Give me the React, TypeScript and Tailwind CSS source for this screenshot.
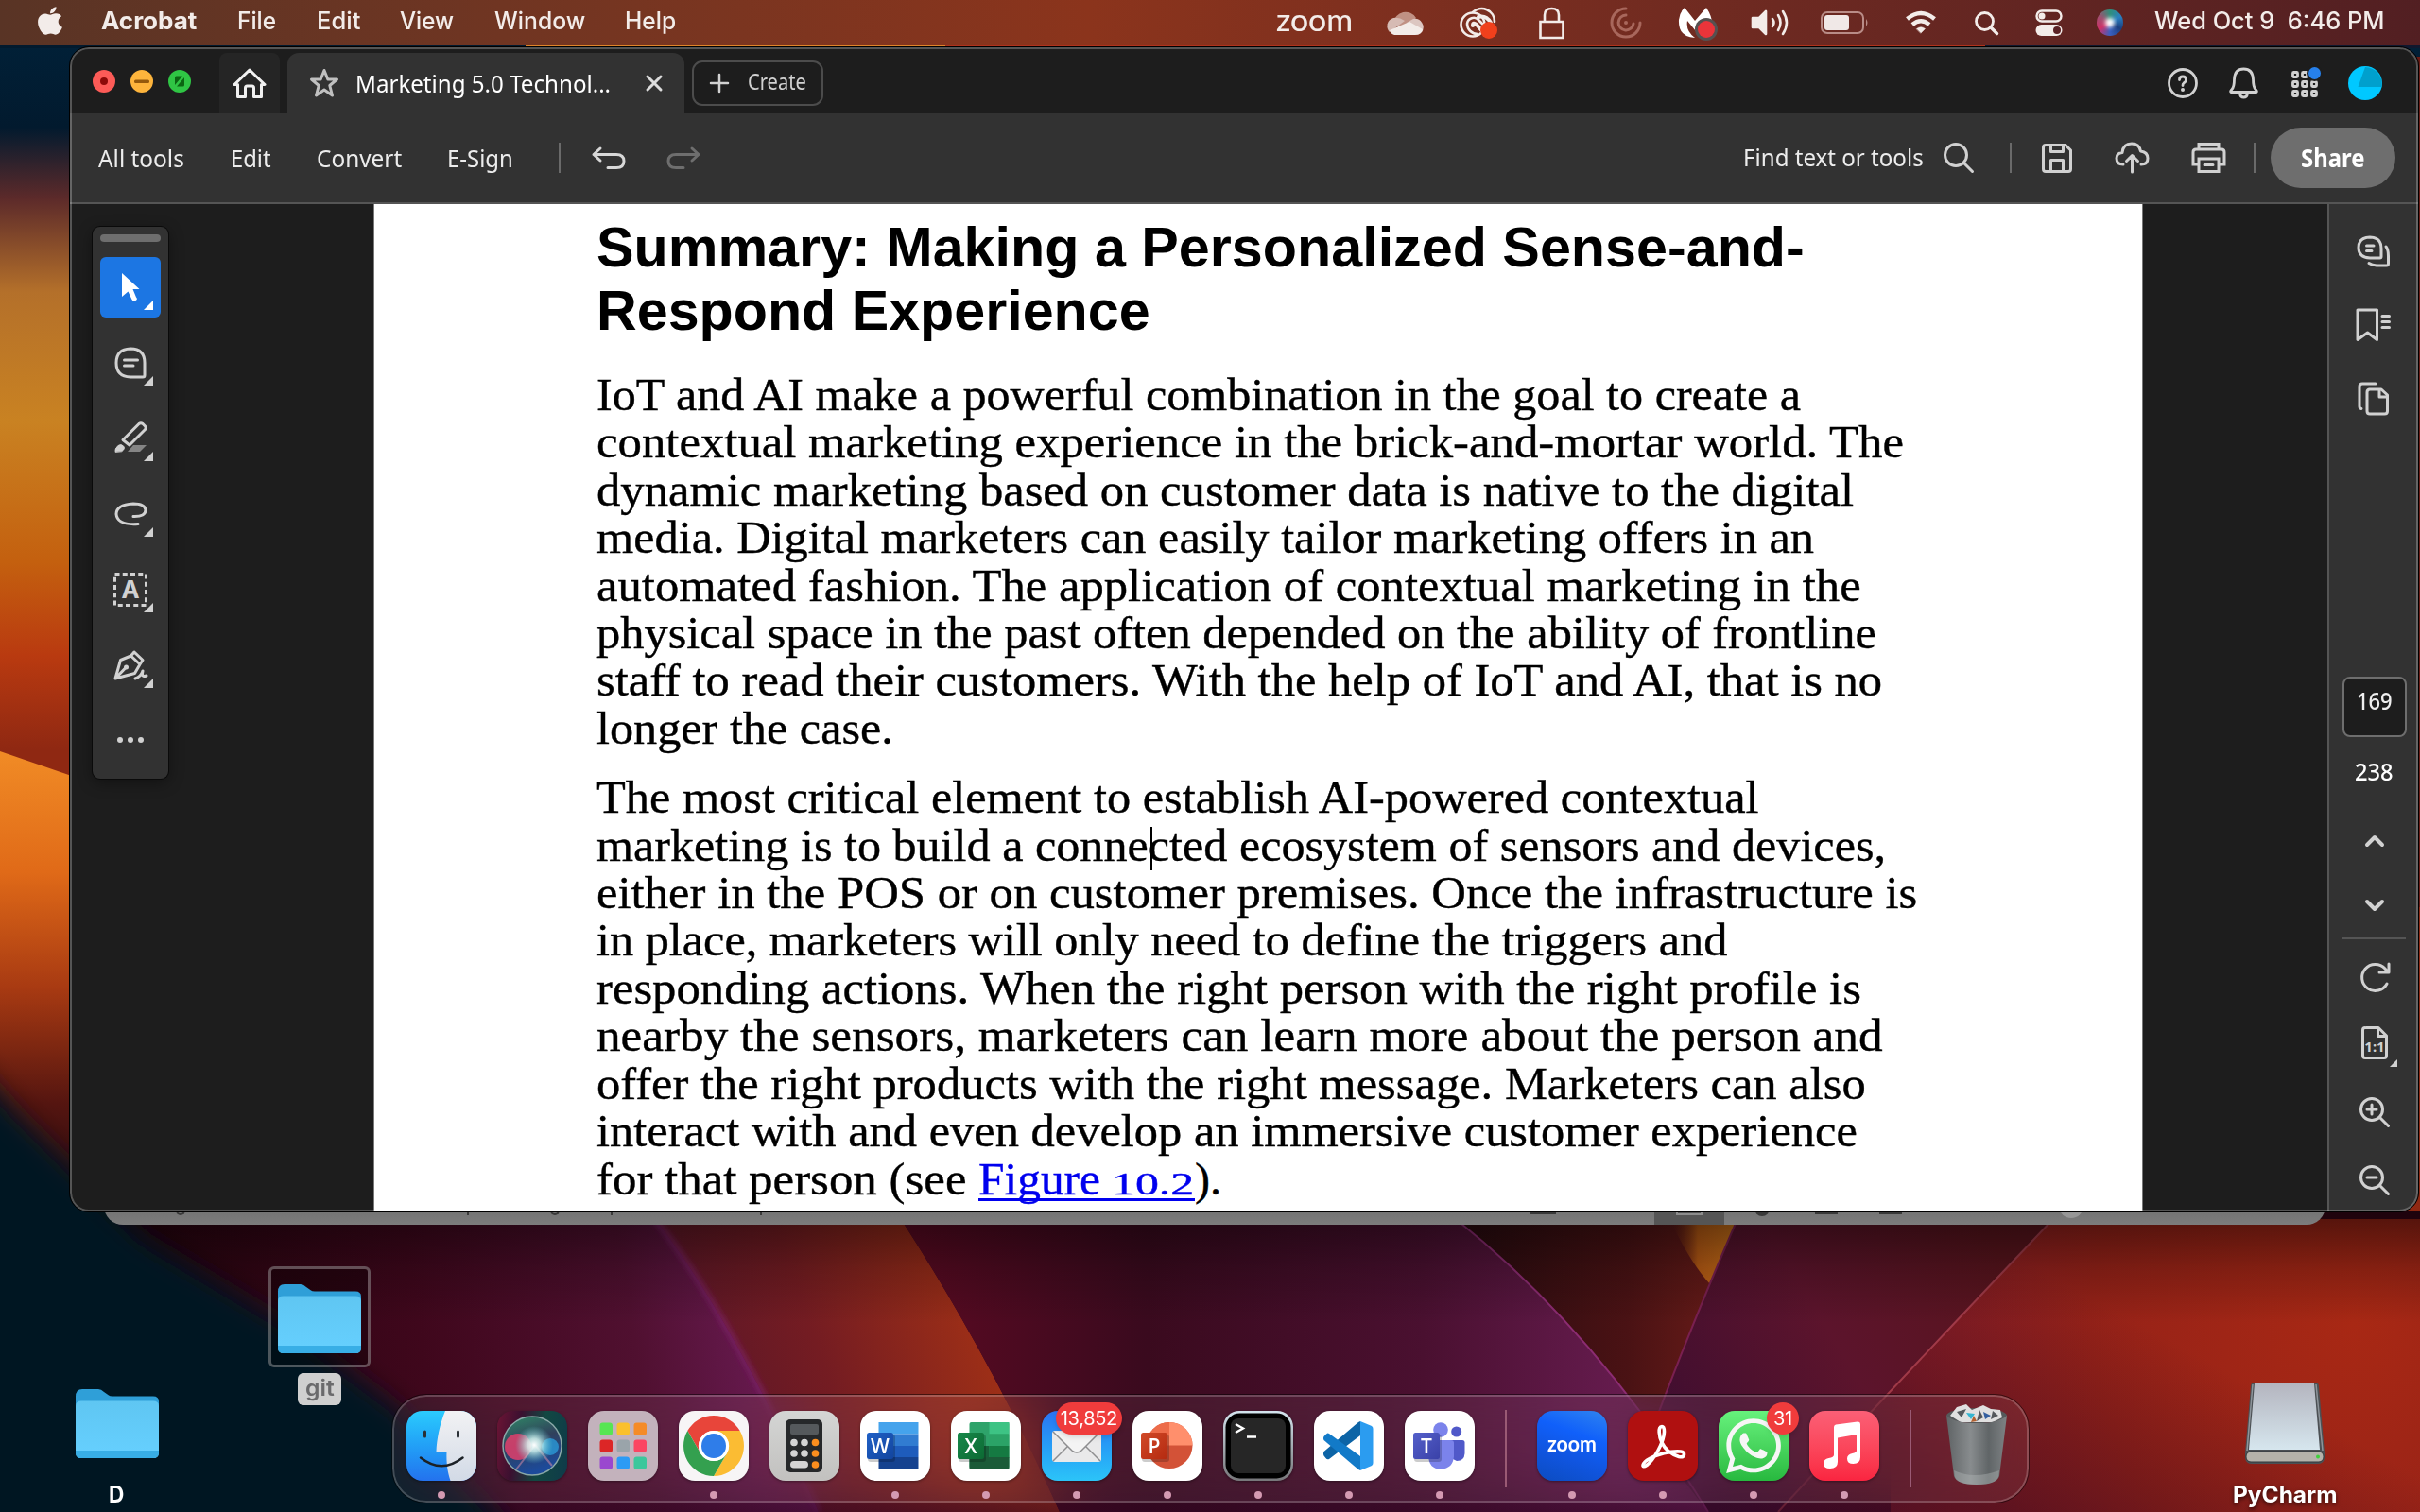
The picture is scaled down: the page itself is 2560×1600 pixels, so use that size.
import React, { useLayoutEffect, useRef, useState } from "react";
import { FaApple, FaWhatsapp } from "react-icons/fa";

/* Text stretched horizontally so that it fills exactly `w` pixels. */
function Fit({ w, className = "", children }: { w: number; className?: string; children: React.ReactNode }) {
  const ref = useRef<HTMLSpanElement>(null);
  const [s, setS] = useState(1);
  useLayoutEffect(() => {
    if (ref.current) setS(w / ref.current.offsetWidth);
  }, [w]);
  return (
    <span className={"inline-block shrink-0 " + className} style={{ width: w }}>
      <span ref={ref} className="inline-block origin-left whitespace-pre" style={{ transform: `scaleX(${s})` }}>
        {children}
      </span>
    </span>
  );
}

type IconProps = { w: number; h: number; className?: string; children: React.ReactNode; sw?: number };
function Ico({ w, h, className = "", children, sw = 3 }: IconProps) {
  return (
    <svg
      width={w}
      height={h}
      viewBox={`0 0 ${w} ${h}`}
      fill="none"
      stroke="currentColor"
      strokeWidth={sw}
      strokeLinecap="round"
      strokeLinejoin="round"
      className={"block shrink-0 overflow-visible " + className}
    >
      {children}
    </svg>
  );
}

function Wallpaper() {
  return (
    <svg className="absolute inset-0" width="2560" height="1600" viewBox="0 0 2560 1600">
      <defs>
        <linearGradient id="wpBase" x1="200" y1="1500" x2="830" y2="1400" gradientUnits="userSpaceOnUse">
          <stop offset="0" stopColor="#2a0410" />
          <stop offset="0.4" stopColor="#3f071c" />
          <stop offset="0.75" stopColor="#501030" />
          <stop offset="1" stopColor="#6c1c56" />
        </linearGradient>
        <linearGradient id="wpLeft" x1="0" y1="48" x2="0" y2="1290" gradientUnits="userSpaceOnUse">
          <stop offset="0" stopColor="#012037" />
          <stop offset="0.07" stopColor="#021a2e" />
          <stop offset="0.13" stopColor="#5c2a2a" />
          <stop offset="0.21" stopColor="#b4702a" />
          <stop offset="0.32" stopColor="#c98222" />
          <stop offset="0.44" stopColor="#c4600f" />
          <stop offset="0.52" stopColor="#b93a10" />
          <stop offset="0.6" stopColor="#8f2812" />
          <stop offset="1" stopColor="#8f2812" />
        </linearGradient>
        <linearGradient id="wpLeft2" x1="0" y1="800" x2="0" y2="1290" gradientUnits="userSpaceOnUse">
          <stop offset="0" stopColor="#f08a25" />
          <stop offset="0.25" stopColor="#e06a18" />
          <stop offset="0.5" stopColor="#a83a12" />
          <stop offset="0.75" stopColor="#551510" />
          <stop offset="1" stopColor="#200810" />
        </linearGradient>
        <linearGradient id="wpOrange" x1="700" y1="1500" x2="1040" y2="1380" gradientUnits="userSpaceOnUse">
          <stop offset="0" stopColor="#54152a" />
          <stop offset="0.5" stopColor="#741c22" />
          <stop offset="1" stopColor="#a03016" />
        </linearGradient>
        <linearGradient id="wpMid" x1="960" y1="0" x2="1800" y2="0" gradientUnits="userSpaceOnUse">
          <stop offset="0" stopColor="#5a0a22" />
          <stop offset="0.3" stopColor="#3a0a1e" />
          <stop offset="0.65" stopColor="#4a1030" />
          <stop offset="1" stopColor="#70205a" />
        </linearGradient>
        <linearGradient id="wpDark" x1="1560" y1="0" x2="1830" y2="0" gradientUnits="userSpaceOnUse">
          <stop offset="0" stopColor="#2c0c10" />
          <stop offset="0.6" stopColor="#4a1214" />
          <stop offset="1" stopColor="#6a1c18" />
        </linearGradient>
        <linearGradient id="wpR1" x1="1760" y1="1500" x2="2100" y2="1300" gradientUnits="userSpaceOnUse">
          <stop offset="0" stopColor="#400e30" />
          <stop offset="0.5" stopColor="#5c142c" />
          <stop offset="1" stopColor="#58141c" />
        </linearGradient>
        <radialGradient id="wpR2" cx="2490" cy="1400" r="620" gradientUnits="userSpaceOnUse">
          <stop offset="0" stopColor="#a82814" />
          <stop offset="0.45" stopColor="#962218" />
          <stop offset="0.75" stopColor="#8a1e28" />
          <stop offset="1" stopColor="#70183a" />
        </radialGradient>
        <linearGradient id="wpDim" x1="2300" y1="1420" x2="2180" y2="1640" gradientUnits="userSpaceOnUse">
          <stop offset="0" stopColor="#3c0a1c" stopOpacity="0" />
          <stop offset="1" stopColor="#3c0a1c" stopOpacity="0.6" />
        </linearGradient>
        <linearGradient id="wpShade" x1="0" y1="1282" x2="0" y2="1400" gradientUnits="userSpaceOnUse">
          <stop offset="0" stopColor="#000" stopOpacity="0.5" />
          <stop offset="0.5" stopColor="#000" stopOpacity="0.2" />
          <stop offset="1" stopColor="#000" stopOpacity="0" />
        </linearGradient>
        <linearGradient id="wpTri" x1="1770" y1="0" x2="1835" y2="0" gradientUnits="userSpaceOnUse">
          <stop offset="0" stopColor="#7a3010" stopOpacity="0" />
          <stop offset="0.4" stopColor="#b65a14" />
          <stop offset="1" stopColor="#c87018" />
        </linearGradient>
        <linearGradient id="wpBot" x1="0" y1="1540" x2="0" y2="1600" gradientUnits="userSpaceOnUse">
          <stop offset="0" stopColor="#2a0420" stopOpacity="0" />
          <stop offset="1" stopColor="#2a0420" stopOpacity="0.55" />
        </linearGradient>
        <filter id="soft" x="-20%" y="-20%" width="140%" height="140%">
          <feGaussianBlur stdDeviation="14" />
        </filter>
        <filter id="soft2" x="-20%" y="-20%" width="140%" height="140%">
          <feGaussianBlur stdDeviation="3" />
        </filter>
      </defs>
      <rect width="2560" height="1600" fill="#3c0519" />
      <path d="M0 1200H693V1290Q775 1395 866 1600H0Z" fill="url(#wpBase)" />
      <rect width="2560" height="1282" fill="url(#wpLeft)" />
      <path d="M0 795L160 850V1290H0Z" fill="url(#wpLeft2)" />
      {/* petals along the bottom */}
      <path d="M693 1290Q775 1395 866 1600H1121Q1050 1440 953 1290Z" fill="url(#wpOrange)" />
      <path d="M693 1290Q775 1395 866 1600" stroke="#7d2068" strokeWidth="5" fill="none" filter="url(#soft2)" />
      <path d="M953 1290Q1050 1440 1121 1600H1807Q1720 1450 1560 1290Z" fill="url(#wpMid)" />
      <path d="M1540 1290Q1690 1410 1807 1600H1881L2169 1290Z" fill="url(#wpDark)" />
      <path d="M1766 1290H1838L1812 1362Q1790 1340 1766 1290Z" fill="url(#wpTri)" />
      <path d="M1838 1290Q1790 1400 1745 1520L1807 1600H1881L2172 1290Z" fill="url(#wpR1)" />
      <path d="M2172 1290Q2010 1460 1881 1600H2560V1290Z" fill="url(#wpR2)" />
      <path d="M2172 1290Q2010 1460 1881 1600H2560V1290Z" fill="url(#wpDim)" />
      <path d="M1540 1290Q1690 1410 1807 1600" stroke="#8c2c72" strokeWidth="2" fill="none" />
      <path d="M2172 1290Q2010 1460 1881 1600" stroke="#a03a48" strokeWidth="2" fill="none" />
      <path d="M1838 1290Q1790 1400 1745 1520" stroke="#7a2050" strokeWidth="2" fill="none" />
      <rect y="1540" x="500" width="1500" height="60" fill="url(#wpBot)" />
      <rect y="1282" width="2560" height="120" fill="url(#wpShade)" />
      <path d="M-60 1090L20 1180L150 1310L300 1400L420 1490L560 1640H-60Z" fill="#031421" filter="url(#soft)" />
      <rect y="48" width="560" height="3" fill="#021a2e" />
      <rect x="556" y="48" width="500" height="3" fill="#e0842a" />
      <rect x="1000" y="48" width="1100" height="3" fill="#b0321c" />
      <rect x="2100" y="48" width="460" height="3" fill="#10182e" />
      <rect x="2555" y="60" width="5" height="900" fill="#6b1a14" />
    </svg>
  );
}

function MenuBar() {
  return (
    <header className="relative flex h-12 items-center bg-linear-to-r from-[#593425] via-[#8b341c] via-45% to-[#521f22] pl-10 font-['Inter'] text-[25px] text-[#f3ece9]">
      <FaApple className="-mt-1 h-8 w-[26px] shrink-0 scale-x-110 scale-y-105" />
      <div className="flex pb-[2px]">
        <Fit w={101} className="ml-[41px] font-bold">Acrobat</Fit>
        <Fit w={41} className="ml-[43px] font-medium">File</Fit>
        <Fit w={46} className="ml-[43px] font-medium">Edit</Fit>
        <Fit w={57} className="ml-[42px] font-medium">View</Fit>
        <Fit w={96} className="ml-[43px] font-medium">Window</Fit>
        <Fit w={54} className="ml-[42px] font-medium">Help</Fit>
      </div>
      <div className="ml-auto flex items-center pr-[38px]">
        <Fit w={81} className="pb-[6px] font-['Lato'] text-[32px] leading-[36px] font-medium">zoom</Fit>
        <Ico w={40} h={28} className="ml-[35px]" sw={0}>
          <path d="M8 14A13 13 0 0 1 32 9L20 20Z" fill="#c09184" />
          <path d="M8 9Q14 8 20 12L4 24A9 9 0 0 1 8 9Z" fill="#d6bbb4" />
          <path d="M29 10A9 9 0 0 1 38 24L22 14Z" fill="#dcc6c1" />
          <path d="M4 22L25 13L39 21Q38 27 31 27H9Q5 26 4 22Z" fill="#f3ece9" />
        </Ico>
        <Ico w={40} h={32} className="ml-[38px]" sw={2.6}>
          <circle cx="14" cy="18" r="12.5" />
          <path d="M14 5A13.500 13.500 0 0 1 37 15" />
          <path d="M19 28A11 11 0 0 1 8 17A7 7 0 0 1 20 13L26 19" />
          <path d="M14 19Q14 15 18 18L24 25" strokeWidth="4" />
          <path d="M20 10Q28 8 33 16" strokeWidth="4" />
          <circle cx="31" cy="24" r="9" fill="#f0401c" stroke="none" />
        </Ico>
        <Ico w={27} h={34} className="ml-[44px]" sw={2.6}>
          <path d="M1.500 16H25.500V33H1.500ZM6 16V9Q6 2 13.500 2T21 9V16" strokeLinejoin="miter" />
        </Ico>
        <Ico w={32} h={34} className="ml-[49px] text-[#a8675c]" sw={3}>
          <path d="M16 2A15 15 0 1 0 31 17" />
          <path d="M16 9A8 8 0 1 0 24 18" />
          <circle cx="16" cy="17" r="2" fill="currentColor" stroke="none" />
        </Ico>
        <Ico w={40} h={34} className="ml-[39px]" sw={0}>
          <path d="M7 1L18 15L30 1Q41 18 32 28L29 14L19 26L10 15Q8 26 18 33Q0 32 1 14Q2 6 7 1Z" fill="#fff" />
          <circle cx="30" cy="24" r="12" fill="#565050" />
          <circle cx="30" cy="24" r="9" fill="#ea343a" />
        </Ico>
        <Ico w={39} h={28} className="ml-[38px]" sw={2.6}>
          <path d="M1 9H8L15 2V26L8 19H1Z" fill="currentColor" />
          <path d="M22 10Q25 14 22 18M28 6Q33 14 28 22M33 2Q41 14 33 26" />
        </Ico>
        <Ico w={51} h={24} className="ml-[34px]" sw={2}>
          <rect x="1" y="1" width="44" height="22" rx="6" stroke="#b98c87" />
          <rect x="4" y="4" width="26" height="16" rx="3" fill="#f0e8e7" stroke="none" />
          <path d="M48 8Q51 12 48 16Z" fill="#b98c87" stroke="none" />
        </Ico>
        <Ico w={34} h={26} className="ml-[38px]" sw={4.500}>
          <path d="M2.500 9Q17-3 31.500 9" strokeLinecap="butt" />
          <path d="M8 15Q17 7.500 26 15" strokeLinecap="butt" />
          <path d="M12.500 19.500Q17 16 21.500 19.500L17 24Z" fill="currentColor" strokeWidth="0.500" />
        </Ico>
        <Ico w={25} h={25} className="ml-[40px]" sw={2.800}>
          <circle cx="10.500" cy="10.500" r="9" />
          <path d="M17 17L23.500 23.500" strokeWidth="3.500" />
        </Ico>
        <Ico w={30} h={28} className="ml-[39px]" sw={2.400}>
          <rect x="1.500" y="1.500" width="26" height="11" rx="5.500" />
          <circle cx="7" cy="7" r="3.500" fill="currentColor" stroke="none" />
          <rect x="0.500" y="16" width="28" height="12" rx="6" fill="currentColor" stroke="none" />
          <circle cx="23" cy="22" r="4" fill="#5b2124" stroke="none" />
        </Ico>
        <div className="ml-[35px] flex size-7 items-center justify-center rounded-full bg-[conic-gradient(#2f8f7a,#2a7fc0,#1a3f80,#3a60c0,#d03068,#a05070,#2f8f7a)]">
          <div className="size-2.5 rounded-full bg-white blur-[2px]" />
        </div>
        <Fit w={243} className="ml-[33px] pb-[2px] font-medium">Wed Oct 9  6:46 PM</Fit>
      </div>
    </header>
  );
}

function TitleBar() {
  return (
    <div className="flex h-[70px] items-center bg-[#1d1d1d] pr-[38px] pl-6 font-['Noto_Sans'] text-[#d1d1d1]">
      <div className="flex gap-4 pt-[2px]">
        <Ico w={24} h={24} sw={0}>
          <circle cx="12" cy="12" r="12" fill="#fc5b57" />
          <circle cx="12" cy="12" r="4" fill="#8c0a08" />
        </Ico>
        <Ico w={24} h={24} sw={0}>
          <circle cx="12" cy="12" r="12" fill="#fdb43c" />
          <rect x="4" y="10.500" width="16" height="3.500" rx="1.500" fill="#94590c" />
        </Ico>
        <Ico w={24} h={24} sw={0}>
          <circle cx="12" cy="12" r="12" fill="#2fc544" />
          <path d="M7 16V8Q7 6.500 8.500 6.500H15ZM17 8V16Q17 17.500 15.500 17.500H9Z" fill="#0b6512" />
        </Ico>
      </div>
      <div className="ml-[30px] flex h-16 w-16 items-center justify-center self-end rounded-t-lg bg-[#252525] text-[#f0f0f0]">
        <Ico w={36} h={32} sw={3}>
          <path d="M18 2L34 17.500H30.500V30.500H22.500V21Q22.500 19 20.500 19H15.500Q13.500 19 13.500 21V30.500H5.500V17.500H2Z" />
        </Ico>
      </div>
      <div className="ml-2 flex h-16 w-[420px] items-center self-end rounded-t-xl bg-[#323232] pl-[23px]">
        <Ico w={32} h={32} sw={3} className="text-[#c0c0c0]">
          <path d="M16 2.500L19.800 12H29.500L21.800 18.500L24.500 29L16 23L7.500 29L10.200 18.500L2.500 12H12.200Z" />
        </Ico>
        <Fit w={270} className="ml-[17px] text-[26px] text-white">Marketing 5.0 Technol...</Fit>
        <Ico w={16} h={16} sw={3} className="ml-[38px] text-[#dcdcdc]">
          <path d="M1 1L15 15M15 1L1 15" />
        </Ico>
      </div>
      <div className="mt-[14px] ml-[8px] flex h-12 w-[139px] items-center self-start rounded-[11px] border-2 border-[#4c4c4c] pl-[17px]">
        <Ico w={20} h={20} sw={2.500}>
          <path d="M10 1V19M1 10H19" />
        </Ico>
        <Fit w={62} className="ml-[20px] pb-1 text-[23px]">Create</Fit>
      </div>
      <div className="ml-auto flex items-center pt-1.5">
        <Ico w={32} h={32} sw={2.800}>
          <circle cx="16" cy="16" r="14.500" />
          <path d="M12.500 12.500Q12.500 9 16 9T19.500 12.500Q19.500 14.500 17 16Q16 16.800 16 18.500" />
          <circle cx="16" cy="23" r="2" fill="currentColor" stroke="none" />
        </Ico>
        <Ico w={32} h={34} sw={2.800} className="ml-[33px]">
          <path d="M2 26.500H29Q30 25.500 28 23.500Q25.500 21 25.500 13Q25 2 15.500 2T5.500 13Q5.500 21 3 23.500Q1 25.500 2 26.500Z" />
          <path d="M11.500 28Q12 32 15.500 32T19.500 28" />
        </Ico>
        <div className="relative ml-[34px]">
          <Ico w={30} h={30} sw={2.800}>
            {[3.500, 13.500, 23.500].map((y) =>
              [3.500, 13.500, 23.500].map((x) => <rect key={`${x}-${y}`} x={x - 2} y={y} width="5" height="5" rx="1" />)
            )}
          </Ico>
          <span className="absolute -top-1 right-[-3px] size-[17px] rounded-full border-2 border-[#1d1d1d] bg-[#2680eb]" />
        </div>
        <Ico w={36} h={36} sw={0} className="ml-[30px]">
          <circle cx="18" cy="18" r="18" fill="#00c8ff" />
          <path d="M18 1A18 18 0 0 1 35.500 22H10.500Z" fill="#00a0cd" />
        </Ico>
      </div>
    </div>
  );
}

function Toolbar() {
  return (
    <div className="flex h-24 items-center border-b-2 border-[#555] bg-[#323232] pr-6 pl-[30px] font-['Noto_Sans'] text-[26px] text-[#ececec]">
      <Fit w={91} className="pt-px">All tools</Fit>
      <Fit w={43} className="ml-[49px] pt-px">Edit</Fit>
      <Fit w={90} className="ml-[48px] pt-px">Convert</Fit>
      <Fit w={70} className="ml-[48px] pt-px">E-Sign</Fit>
      <span className="ml-[48px] h-8 w-[2px] bg-[#6a6a6a]" />
      <Ico w={36} h={24} sw={3} className="ml-[33px] text-[#d8d8d8]">
        <path d="M9 2L2 8.500L9 15M2 8.500H26Q34 8.500 34 15.500T26 22.500H17" />
      </Ico>
      <Ico w={36} h={24} sw={3} className="ml-[43px] text-[#6e6e6e]">
        <path d="M27 2L34 8.500L27 15M34 8.500H10Q2 8.500 2 15.500T10 22.500H18" />
      </Ico>
      <div className="ml-auto flex items-center text-[#d1d1d1]">
        <Fit w={191} className="pb-[2px] text-[#ececec]">Find text or tools</Fit>
        <Ico w={32} h={32} sw={3} className="ml-[21px]">
          <circle cx="13" cy="13" r="11.500" />
          <path d="M21.500 21.500L30.500 30.500" />
        </Ico>
        <span className="ml-[38px] h-8 w-[2px] bg-[#6a6a6a]" />
        <Ico w={32} h={31} sw={3} className="ml-[32px]">
          <path d="M4 1.500H25L30.500 7V27Q30.500 29.500 28 29.500H4Q1.500 29.500 1.500 27V4Q1.500 1.500 4 1.500Z" />
          <path d="M9.500 1.500V8.500H22.500V1.500M9.500 29.500V17.500H22.500V29.500" />
        </Ico>
        <Ico w={37} h={34} sw={3} className="ml-[45px]">
          <path d="M9 24Q2 24 2 17.500Q2 12 8 11.500Q9 2 18 2Q26 2 27.500 10Q35 11 35 17.500Q35 24 28 24M18.500 32V15M12.500 20.500L18.500 14.500L24.500 20.500" />
        </Ico>
        <Ico w={37} h={32} sw={3} className="ml-[44px]">
          <path d="M8 7V1.500H29V7M8 23H2V10Q2 7 5 7H32Q35 7 35 10V23H29M8 17H29V30.500H8ZM14 23.500H23" strokeLinejoin="miter" />
        </Ico>
        <span className="ml-[29px] h-8 w-[2px] bg-[#6a6a6a]" />
        <div className="ml-[16px] flex h-16 w-[132px] items-center justify-center rounded-full bg-[#6e6e6e] pr-[2px] text-white">
          <Fit w={67} className="pt-px font-bold">Share</Fit>
        </div>
      </div>
    </div>
  );
}

const corner = (
  <svg width="10" height="10" className="absolute right-2 bottom-2">
    <path d="M10 0V10H0Z" fill="currentColor" />
  </svg>
);

const tools: { id: string; icon: React.ReactNode }[] = [
  {
    id: "select",
    icon: (
      <Ico w={18} h={30} sw={0} className="mb-px">
        <path d="M0 0V25L6.500 19.500L10.500 28Q12 30.500 14.500 29T15 25.500L11.500 17H18.500Z" fill="#fff" />
      </Ico>
    ),
  },
  {
    id: "comment",
    icon: (
      <Ico w={34} h={34}>
        <path d="M17 2Q32 2 32 17V30Q32 32 30 32H17Q2 31.500 2 17T17 2ZM10.500 14H24.500M10.500 20H20" />
      </Ico>
    ),
  },
  {
    id: "highlight",
    icon: (
      <Ico w={35} h={32} className="mb-1">
        <path d="M26 2.500Q28 1 30 2.500L32.500 5Q34 6.500 32.500 8.500L16 25L9 19.500Z" />
        <path d="M1 32Q0 29 4 25.500Q7 23.500 9.500 26T8 31.500Z" fill="currentColor" strokeWidth="1" />
        <path d="M20 25H34L27 32H14Z" fill="#858585" stroke="none" />
      </Ico>
    ),
  },
  {
    id: "draw",
    icon: (
      <Ico w={35} h={26}>
        <path d="M20 15.500Q33 16 33 8.500Q32 2 20 2Q2 3 2 13Q3 25 25 23.500" />
      </Ico>
    ),
  },
  {
    id: "text",
    icon: (
      <Ico w={36} h={36}>
        <path d="M1.500 1.500H34.500V34.500H1.500Z" strokeDasharray="5 3.250" strokeLinecap="butt" />
        <text x="18" y="27" textAnchor="middle" fontFamily="Noto Sans" fontWeight="700" fontSize="26" fill="currentColor" stroke="none">A</text>
      </Ico>
    ),
  },
  {
    id: "sign",
    icon: (
      <Ico w={36} h={32}>
        <path d="M2 30L7.500 10.500L18.500 6L28 15L22.500 24.500L2 30L13 18.500M18.500 6L22 2L31 10.500L28 15M23 30Q29 28 31 22Q29 29 35 27" />
        <circle cx="13.500" cy="18" r="2.500" fill="currentColor" stroke="none" />
      </Ico>
    ),
  },
];

function Palette() {
  return (
    <div className="flex h-[584px] w-20 flex-col items-center rounded-lg bg-[#323232] pt-2 text-[#d1d1d1] shadow-[0_0_0_1px_#0a0a0a,0_4px_16px_rgba(0,0,0,0.4)]">
      <span className="h-2 w-16 rounded bg-[#6e6e6e]" />
      <div className="mt-4 flex flex-col gap-4">
        {tools.map((t) => (
          <div
            key={t.id}
            className={
              t.id === "select"
                ? "relative flex size-16 items-center justify-center rounded-md bg-[#1c76e3] text-white"
                : "relative flex size-16 items-center justify-center"
            }
          >
            {t.icon}
            {corner}
          </div>
        ))}
      </div>
      <div className="mt-[44px] flex gap-[5px]">
        <span className="size-1.5 rounded-full bg-[#d1d1d1]" />
        <span className="size-1.5 rounded-full bg-[#d1d1d1]" />
        <span className="size-1.5 rounded-full bg-[#d1d1d1]" />
      </div>
    </div>
  );
}

const para1: [string, number][] = [
  ["IoT and AI make a powerful combination in the goal to create a", 1274],
  ["contextual marketing experience in the brick-and-mortar world. The", 1383],
  ["dynamic marketing based on customer data is native to the digital", 1330],
  ["media. Digital marketers can easily tailor marketing offers in an", 1288],
  ["automated fashion. The application of contextual marketing in the", 1338],
  ["physical space in the past often depended on the ability of frontline", 1354],
  ["staff to read their customers. With the help of IoT and AI, that is no", 1360],
  ["longer the case.", 314],
];
const para2: [string, number][] = [
  ["The most critical element to establish AI-powered contextual", 1230],
  ["marketing is to build a connected ecosystem of sensors and devices,", 1364],
  ["either in the POS or on customer premises. Once the infrastructure is", 1397],
  ["in place, marketers will only need to define the triggers and", 1196],
  ["responding actions. When the right person with the right profile is", 1338],
  ["nearby the sensors, marketers can learn more about the person and", 1361],
  ["offer the right products with the right message. Marketers can also", 1343],
  ["interact with and even develop an immersive customer experience", 1334],
];

function Page() {
  return (
    <article className="h-full w-[1870px] overflow-hidden bg-white pt-3 pl-[235px] text-black">
      <h1 className="flex flex-col font-['Liberation_Sans'] text-[58.8px] leading-[67px] font-bold">
        <Fit w={1278}>Summary: Making a Personalized Sense-and-</Fit>
        <Fit w={586}>Respond Experience</Fit>
      </h1>
      <p className="mt-[31px] flex flex-col font-['Liberation_Serif'] text-[48px] leading-[50.4px] [-webkit-text-stroke:0.4px_#000]">
        {para1.map(([t, w]) => (
          <Fit key={t} w={w}>{t}</Fit>
        ))}
      </p>
      <p className="relative mt-[23px] flex flex-col font-['Liberation_Serif'] text-[48px] leading-[50.4px] [-webkit-text-stroke:0.4px_currentColor]">
        {para2.map(([t, w]) => (
          <Fit key={t} w={w}>{t}</Fit>
        ))}
        <span className="flex">
          <Fit w={404}>{"for that person (see "}</Fit>
          <span className="flex h-[48px] border-b-[3px] border-[#0000ee] text-[#0000ee]">
            <Fit w={141}>{"Figure "}</Fit>
            <Fit w={88}>
              <span className="text-[34px]">10.2</span>
            </Fit>
          </span>
          <Fit w={28}>).</Fit>
        </span>
        <span className="absolute top-[56px] left-[586px] h-[46px] w-[2px] bg-black" />
      </p>
    </article>
  );
}

function Rail() {
  return (
    <aside className="flex w-[96px] flex-col items-center border-l-2 border-[#555] bg-[#323232] font-['Noto_Sans'] text-[26px] text-[#d1d1d1]">
      <Ico w={35} h={36} className="mt-[33px] mr-[2px]">
        <path d="M14 2Q26 2 26 14V22.500Q26 24 24.500 24H14Q2 23.500 2 13T14 2ZM10.500 11H18M10.500 16.500H16" />
        <path d="M31 12Q33.500 15 33.500 22V30Q33.500 32 31.500 32H21Q16 31.500 13 29.500" />
      </Ico>
      <Ico w={37} h={36} className="mt-[41px] mr-[2px]">
        <path d="M2 2H22.500V33.500L12.500 26L2 33.500ZM28 8.500H35.500M28 14.500H35.500M28 20.500H35.500" />
      </Ico>
      <Ico w={33} h={36} className="mt-[42px] mr-[2px]">
        <path d="M19 2H5Q2 2 2 5V26Q2 28 4 28.500M12 8H25L31.500 14V31Q31.500 34 28.500 34H13Q10 34 10 31V11Q10 8 13 8M23 8V16H31.500" />
      </Ico>
      <div className="mt-[276px] ml-[2px] flex h-16 w-[68px] justify-center rounded-lg border-2 border-[#6e6e6e] bg-[#1d1d1d] pt-1 text-[#efefef]">
        <Fit w={38} className="leading-[38px] font-medium">169</Fit>
      </div>
      <Fit w={41} className="mt-[17px] leading-[38px] font-medium text-white">238</Fit>
      <Ico w={20} h={12} sw={4} className="mt-[49px] ml-[2px]">
        <path d="M2 10L10 2L18 10" />
      </Ico>
      <Ico w={20} h={12} sw={4} className="mt-[56px] ml-[2px]">
        <path d="M2 2L10 10L18 2" />
      </Ico>
      <span className="mt-[28px] h-[2px] w-[68px] bg-[#555]" />
      <Ico w={32} h={32} className="mt-[24px] ml-[2px]">
        <path d="M29 23A14 14 0 1 1 27 7L30 10.500M31 2V11H21" />
      </Ico>
      <div className="relative mt-[36px] ml-[2px]">
        <Ico w={28} h={35}>
          <path d="M5 1.500H18L26.500 10V31Q26.500 33.500 24 33.500H4Q1.500 33.500 1.500 31V4Q1.500 1.500 4 1.500M17.500 2V10.500H26" />
          <text x="14" y="27" textAnchor="middle" fontFamily="Noto Sans" fontWeight="700" fontSize="15" fill="currentColor" stroke="none">1:1</text>
        </Ico>
        <svg width="8" height="8" className="absolute -right-2.5 -bottom-2">
          <path d="M8 0V8H0Z" fill="currentColor" />
        </svg>
      </div>
      <Ico w={32} h={32} className="mt-[40px] ml-[2px]">
        <circle cx="13" cy="13" r="11.500" />
        <path d="M21.500 21.500L30.500 30.500M8 13H18M13 8V18" />
      </Ico>
      <Ico w={32} h={32} className="mt-[40px] ml-[2px]">
        <circle cx="13" cy="13" r="11.500" />
        <path d="M21.500 21.500L30.500 30.500M8 13H18" />
      </Ico>
    </aside>
  );
}

function AcrobatWindow() {
  return (
    <div className="absolute top-[50px] left-[74px] h-[1232px] w-[2484px] overflow-hidden rounded-[20px] bg-[#1d1d1d] outline-1 outline-black">
      <div className="flex h-full flex-col">
        <TitleBar />
        <Toolbar />
        <div className="flex min-h-0 flex-1">
          <div className="w-[322px] border-r border-[#777] pt-6 pl-6">
            <Palette />
          </div>
          <Page />
          <div className="flex-1 border-l border-[#777]" />
          <Rail />
        </div>
      </div>
      <div className="pointer-events-none absolute inset-0 rounded-[20px] border-2 border-white/25" />
    </div>
  );
}

function Folder({ id }: { id: string }) {
  return (
    <svg width="88" height="74" viewBox="0 0 88 74">
      <defs>
        <linearGradient id={id} x1="0" y1="0" x2="0" y2="1">
          <stop offset="0" stopColor="#5fc6f2" />
          <stop offset="1" stopColor="#66d0ff" />
        </linearGradient>
      </defs>
      <path d="M0 8Q0 0 7 0H24Q27 0 30 3L35 6.500Q36 7.500 39 7.500H82Q88 7.500 88 13V40H0Z" fill="#2f9fd8" />
      <path d="M0 18Q0 12.500 6 12.500H82Q88 12.500 88 18V67Q88 73 82 73H6Q0 73 0 67Z" fill={`url(#${id})`} />
      <path d="M0 65H88V67Q88 73 82 73H6Q0 73 0 67Z" fill="#38aee6" />
    </svg>
  );
}

const Tile = ({ id, from, to, letter, x = 7 }: { id: string; from: string; to: string; letter: string; x?: number }) => (
  <g>
    <linearGradient id={id} x1="0" y1="0" x2="1" y2="1">
      <stop offset="0" stopColor={from} />
      <stop offset="1" stopColor={to} />
    </linearGradient>
    <rect x={x + 1} y="25" width="29" height="29" rx="3" fill="#000" opacity="0.2" />
    <rect x={x} y="23" width="28" height="28" rx="2.500" fill={`url(#${id})`} />
    <text x={x + 14} y="45" textAnchor="middle" fontFamily="Open Sans" fontWeight="600" fontSize="21" fill="#fff">{letter}</text>
  </g>
);

const S = ({ children }: { children: React.ReactNode }) => (
  <svg width="74" height="74" viewBox="0 0 74 74" className="block">{children}</svg>
);

const launchColors = [
  ["#57e553", "#fbc02d", "#f58b28"],
  ["#dc2626", "#9aa4aa", "#fb4562"],
  ["#9a48cf", "#2c9bf5", "#3cc79c"],
];

type DockApp = { id: string; bg: string; dot?: boolean; badge?: string; art: React.ReactNode };

const apps: DockApp[] = [
  {
    id: "finder", dot: true, bg: "bg-linear-to-b from-[#2ccbfd] to-[#2472ee]",
    art: (
      <S>
        <linearGradient id="fd" x1="0" y1="0" x2="0" y2="1"><stop offset="0" stopColor="#f2f2f4" /><stop offset="1" stopColor="#d2dae6" /></linearGradient>
        <path d="M41 0C35 15 32 30 31.500 43H42.500C42 55 43.500 65 46.500 74H74V0Z" fill="url(#fd)" />
        <path d="M19.500 22V27M54.500 22V27" stroke="#2a3036" strokeWidth="3" strokeLinecap="round" />
        <path d="M15 49.500Q37 67 59.500 49.500" stroke="#1c2126" strokeWidth="2.500" fill="none" strokeLinecap="round" />
      </S>
    ),
  },
  {
    id: "siri", bg: "bg-[linear-gradient(100deg,#6d1434,#3a1030_30%,#124842_60%,#0e3a4a)]",
    art: (
      <S>
        <radialGradient id="sr"><stop offset="0" stopColor="#fff" /><stop offset="0.35" stopColor="#d8fff8" stopOpacity="0.8" /><stop offset="1" stopColor="#60d0d0" stopOpacity="0" /></radialGradient>
        <linearGradient id="sr2" x1="0" y1="0" x2="0.3" y2="1"><stop offset="0" stopColor="#2f8a66" /><stop offset="0.5" stopColor="#30405c" /><stop offset="1" stopColor="#1c4a9a" /></linearGradient>
        <circle cx="37" cy="37" r="31" fill="url(#sr2)" stroke="#8aa8a8" strokeWidth="1.500" />
        <circle cx="22" cy="38" r="14" fill="#e0406c" opacity="0.85" />
        <circle cx="56" cy="38" r="9" fill="#2a9ad8" opacity="0.8" />
        <path d="M40 36L20 62M40 36L58 58" stroke="#e090a8" strokeWidth="2" opacity="0.5" />
        <circle cx="39" cy="36" r="20" fill="url(#sr)" />
      </S>
    ),
  },
  {
    id: "launchpad", bg: "bg-[#c3b2bc]",
    art: (
      <S>
        {launchColors.map((r, j) => r.map((c, i) => <rect key={c} x={12.5 + i * 18} y={12.5 + j * 18} width="13.500" height="13.500" rx="3" fill={c} />))}
      </S>
    ),
  },
  {
    id: "chrome", dot: true, bg: "bg-[#f7f5f6]",
    art: (
      <S>
        <path d="M9.300 21A32 32 0 0 1 64.700 21H37A16 16 0 0 0 23.100 45Z" fill="#e8453a" />
        <path d="M64.700 21A32 32 0 0 1 37 69L50.900 45A16 16 0 0 0 37 21Z" fill="#fbbc33" />
        <path d="M37 69A32 32 0 0 1 9.300 21L23.100 45A16 16 0 0 0 50.900 45Z" fill="#34a04f" />
        <circle cx="37" cy="37" r="16" fill="#fff" />
        <circle cx="37" cy="37" r="13" fill="#2f7de9" />
      </S>
    ),
  },
  {
    id: "calculator", bg: "bg-linear-to-b from-[#d4d5d4] to-[#c2c1bf]",
    art: (
      <S>
        <rect x="17" y="9" width="39" height="56" rx="5" fill="#26282a" />
        <rect x="22" y="14" width="30" height="11" rx="2" fill="#55595c" />
        {[33.5, 45].map((y) => [26, 37].map((x) => <circle key={`${x}${y}`} cx={x} cy={y} r="3.800" fill="#d4d4d4" />))}
        {[33.5, 45, 57].map((y) => <circle key={y} cx="48.500" cy={y} r="3.800" fill="#fb8e1e" />)}
        <rect x="22" y="53" width="19" height="7.600" rx="3.800" fill="#d4d4d4" />
      </S>
    ),
  },
  {
    id: "word", dot: true, bg: "bg-white",
    art: (
      <S>
        <rect x="19.500" y="12" width="42" height="12.500" fill="#45a3ec" />
        <rect x="19.500" y="24.500" width="42" height="12.500" fill="#317cd1" />
        <rect x="19.500" y="37" width="42" height="12" fill="#1e5cbc" />
        <rect x="19.500" y="49" width="42" height="12" fill="#15428f" />
        <Tile id="tw" from="#2061c6" to="#12459f" letter="W" />
      </S>
    ),
  },
  {
    id: "excel", dot: true, bg: "bg-white",
    art: (
      <S>
        <rect x="19.500" y="12" width="42" height="49" rx="2" fill="#2ea36a" />
        <rect x="40.500" y="12" width="21" height="12.500" fill="#3dc384" />
        <rect x="40.500" y="24.500" width="21" height="12.500" fill="#2ba367" />
        <rect x="19.500" y="37" width="21" height="12.500" fill="#17613a" />
        <rect x="40.500" y="37" width="21" height="12.500" fill="#157a42" />
        <rect x="19.500" y="49" width="42" height="12" fill="#1b5b38" />
        <Tile id="tx" from="#17884a" to="#0c6a33" letter="X" />
      </S>
    ),
  },
  {
    id: "mail", dot: true, badge: "13,852", bg: "bg-linear-to-b from-[#2a72f2] to-[#2cc4f8]",
    art: (
      <S>
        <rect x="11" y="21" width="52" height="33" rx="3" fill="#e9e9ea" />
        <path d="M12 53L29 36M62 53L45 36" stroke="#8e8e90" strokeWidth="1.500" />
        <path d="M12 22L32 42Q37 46 42 42L62 22" fill="#f4f4f4" stroke="#8e8e90" strokeWidth="1.500" />
      </S>
    ),
  },
  {
    id: "powerpoint", dot: true, bg: "bg-white",
    art: (
      <S>
        <circle cx="39" cy="36.500" r="24.500" fill="#d35237" />
        <path d="M39 12A24.500 24.500 0 0 0 14.500 36.500H39Z" fill="#ed6c4a" />
        <path d="M39 12A24.500 24.500 0 0 1 63.500 36.500H39Z" fill="#ff8f6c" />
        <Tile id="tp" from="#d14a28" to="#b52a10" letter="P" x={9} />
      </S>
    ),
  },
  {
    id: "terminal", dot: true, bg: "bg-linear-to-b from-[#d3e4ee] to-[#77777a]",
    art: (
      <S>
        <rect x="2.500" y="2.500" width="69" height="69" rx="15" fill="#000" />
        <rect x="8" y="8" width="58" height="58" rx="8" fill="#262626" />
        <path d="M13 14L21 18.500L13 23M25 27.500H35" stroke="#fff" strokeWidth="2.400" fill="none" />
      </S>
    ),
  },
  {
    id: "vscode", dot: true, bg: "bg-white",
    art: (
      <S>
        <path d="M10.500 43L47 12L49 11V26L16 51Q14 52 12.500 50L10.500 47.500Q9.500 45 10.500 43Z" fill="#0d64a6" />
        <path d="M10.500 31Q9.500 29 10.500 27L13 24.500Q14.500 23 16 24L49 48V63L47 62Z" fill="#127ac8" />
        <path d="M49 11L61 16Q62.500 17 62.500 19V55Q62.500 57 61 58L49 63Z" fill="#2b9cf0" />
      </S>
    ),
  },
  {
    id: "teams", dot: true, bg: "bg-white",
    art: (
      <S>
        <circle cx="54.700" cy="22" r="5.500" fill="#5059c9" />
        <path d="M49 31H61Q63.500 31 63.500 33.500V45Q63 53 55 53L49 50Z" fill="#5059c9" />
        <circle cx="38" cy="20" r="7.800" fill="#7b83eb" />
        <path d="M25 31H49Q52 31 52 34V48Q51 61 38.500 61.500T25 48Z" fill="#7b83eb" />
        <Tile id="tt" from="#5560ca" to="#3a41a8" letter="T" x={9} />
      </S>
    ),
  },
];

const apps2: DockApp[] = [
  {
    id: "zoom", dot: true, bg: "bg-[linear-gradient(200deg,#2f84f0,#1060fa_35%,#1055e0_65%,#0c4cc0)]",
    art: <S><text x="37" y="43" textAnchor="middle" fontFamily="Lato" fontWeight="700" fontSize="23" textLength="52" lengthAdjust="spacingAndGlyphs" fill="#fff">zoom</text></S>,
  },
  {
    id: "acrobat", dot: true, bg: "bg-[#b01010]",
    art: (
      <S>
        <path
          d="M36 16.500C31.500 16.500 33 27 36 33.500C40 42 46 46 54 48.500C60.500 50 61.500 43.500 56 43C45 42 31 46 23 50.500C14.500 55 14 61.500 20 57.500C27 52.500 38.500 33 38.500 22C38.500 18.500 38 16.500 36 16.500Z"
          fill="none" stroke="#fff" strokeWidth="3.600" strokeLinejoin="round"
        />
      </S>
    ),
  },
  {
    id: "whatsapp", dot: true, badge: "31", bg: "bg-linear-to-b from-[#66f27c] to-[#27b93f]",
    art: <FaWhatsapp className="size-[66px] text-[#f6f6f6]" />,
  },
  {
    id: "music", dot: true, bg: "bg-linear-to-b from-[#fb5f76] to-[#fa2440]",
    art: (
      <S>
        <path d="M26 17Q26 15 28 14.500L51 11.500Q54 11 54 14V49Q54 56 46.500 56Q40 56 40 50.500Q40 46 45.500 45Q50 44 50 42V25L30 28.500V54Q30 61 22 61Q15 61 15 55.500Q15 51 20.500 50Q26 49 26 46.500Z" fill="#fff" />
      </S>
    ),
  },
];

function DockSlot({ app }: { app: DockApp }) {
  return (
    <div className="relative flex w-24 flex-col items-center pt-[17px]">
      <div className={"flex size-[74px] items-center justify-center overflow-hidden rounded-[17px] shadow-[0_1px_3px_rgba(0,0,0,0.4)] " + app.bg}>{app.art}</div>
      {app.dot && <span className="mt-[11px] size-2 rounded-full bg-[#d49ab2]" />}
      {app.badge && (
        <span className="absolute top-2 right-0 flex h-[34px] min-w-[34px] items-center justify-center rounded-full bg-[#f03c3c] px-[5px] font-['Inter'] text-[20px] tracking-[-0.3px] text-white shadow-md">
          {app.badge}
        </span>
      )}
    </div>
  );
}

function Dock() {
  return (
    <div className="absolute top-[1476px] left-[415px] flex h-[114px] w-[1731px] justify-center rounded-[36px] border-2 border-white/20 bg-white/[0.06] pr-[3px] outline-1 outline-black/50 backdrop-blur-2xl">
      <div className="-mt-[2px] flex">
        {apps.map((a) => <DockSlot key={a.id} app={a} />)}
        <span className="mx-[21px] mt-4 h-[82px] w-[2px] bg-[#9a5a74]" />
        {apps2.map((a) => <DockSlot key={a.id} app={a} />)}
        <span className="mx-[21px] mt-4 h-[82px] w-[2px] bg-[#9a5a74]" />
        <div className="flex w-24 justify-center pt-2.5">
          <svg width="66" height="86" viewBox="0 0 66 86">
            <defs>
              <linearGradient id="trash" x1="0" y1="0" x2="1" y2="0">
                <stop offset="0" stopColor="#5f6365" />
                <stop offset="0.4" stopColor="#888c8e" />
                <stop offset="0.7" stopColor="#606567" />
                <stop offset="1" stopColor="#7e8284" />
              </linearGradient>
            </defs>
            <ellipse cx="33" cy="12" rx="32" ry="8" fill="#55595b" />
            <path d="M5 12L12 3L22 0L28 6L40 1L48 5L58 6L60 14L50 19H16Z" fill="#e0e0e0" />
            <path d="M12 8L22 5L17 14ZM36 6L40 14L33 18ZM50 7L56 12L48 16Z" fill="#54585c" />
            <path d="M22 9L31 10L27 16Z" fill="#35b5d0" />
            <path d="M40 8L48 12L42 16Z" fill="#3560a0" />
            <path d="M30 12L33 18L27 19Z" fill="#b06030" />
            <path d="M1 12Q10 20 33 20T65 12L57 76Q54 85 33 85T9 76Z" fill="url(#trash)" />
            <path d="M9 70Q30 80 57 70L56 77Q53 85 33 85T10 77Z" fill="#b4b8ba" opacity="0.4" />
          </svg>
        </div>
      </div>
    </div>
  );
}

function Desktop() {
  return (
    <>
      <div className="absolute top-[1340px] left-[284px] flex w-[108px] flex-col items-center font-['Open_Sans'] text-[24px] font-semibold">
        <div className="flex h-[107px] w-[108px] items-center justify-center rounded-md border-[3px] border-white/30 bg-black/30 pt-1">
          <Folder id="f1" />
        </div>
        <div className="mt-[6px] flex h-[34px] w-[46px] items-center justify-center rounded-md bg-[#cfcfcf] pb-[2px] font-['Inter'] text-[#6a6a6c]">
          <Fit w={31}>git</Fit>
        </div>
      </div>
      <div className="absolute top-[1470px] left-[80px] flex w-[88px] flex-col items-center font-['Inter'] text-[24px] font-bold text-white">
        <Folder id="f2" />
        <Fit w={16} className="mt-[23px] mr-[2px] leading-[30px]">D</Fit>
      </div>
      <div className="absolute top-[1463px] left-[2362px] flex w-[110px] flex-col items-center font-['Inter'] text-[24px] font-bold text-white">
        <svg width="86" height="86" viewBox="0 0 86 86">
          <defs>
            <linearGradient id="drv" x1="0" y1="0" x2="0" y2="1">
              <stop offset="0" stopColor="#b4b5bf" />
              <stop offset="1" stopColor="#d6e6ee" />
            </linearGradient>
          </defs>
          <path d="M7 4Q7 0 11 0H75Q79 0 79 4L85 74V80Q84 86 78 86H8Q2 86 1 80V74Z" fill="#4c5054" />
          <path d="M11 1H74L80 71H5Z" fill="url(#drv)" />
          <path d="M9 2L3 72M76 2L83 72" stroke="#8d949a" strokeWidth="1.500" />
          <rect x="2" y="73" width="82" height="11" rx="5" fill="#b5b2aa" stroke="#33373a" />
          <circle cx="78" cy="78.500" r="2" fill="#3fd03c" />
        </svg>
        <Fit w={110} className="mt-[18px] leading-[30px] [text-shadow:0_2px_4px_rgba(0,0,0,0.7)]">PyCharm</Fit>
      </div>
    </>
  );
}

/* Strip of the document window that peeks out below the main one. */
function WindowBehind() {
  return (
    <div className="absolute top-[1200px] left-[110px] flex h-[96px] w-[2350px] items-end rounded-b-[20px] bg-linear-to-b from-[#4a4a4a] to-[#7c7c7c] text-[#3a3a3a]">
      <span className="mb-[10px] ml-[76px] h-2 w-2.5 rounded-b-full border-2 border-t-0 border-current" />
      <span className="mb-[10px] ml-[298px] h-2 w-[2px] bg-current" />
      <span className="mb-[10px] ml-[86px] h-2 w-2.5 rounded-b-full border-2 border-t-0 border-current" />
      <span className="mb-[10px] ml-[54px] h-2 w-[2px] bg-current" />
      <span className="mb-[10px] ml-[156px] h-2 w-[2px] bg-current" />
      <span className="mb-[11px] ml-[812px] h-[3px] w-7 bg-current" />
      <span className="ml-[104px] flex h-full w-[74px] items-end justify-center bg-[#555]">
        <span className="mb-[10px] h-2 w-7 border-2 border-t-0 border-[#8c8c8c]" />
      </span>
      <span className="mb-[9px] ml-[32px] h-2.5 w-4 rounded-b-full bg-current" />
      <span className="mb-[11px] ml-[48px] h-[3px] w-6 bg-current" />
      <span className="mb-[11px] ml-[44px] h-[3px] w-6 bg-current" />
      <span className="mb-[7px] ml-[166px] size-[26px] rounded-full bg-[#979797]" />
    </div>
  );
}

export default function App() {
  return (
    <div className="relative h-[1600px] w-[2560px] overflow-hidden">
      <Wallpaper />
      <MenuBar />
      <WindowBehind />
      <Desktop />
      <AcrobatWindow />
      <Dock />
    </div>
  );
}
